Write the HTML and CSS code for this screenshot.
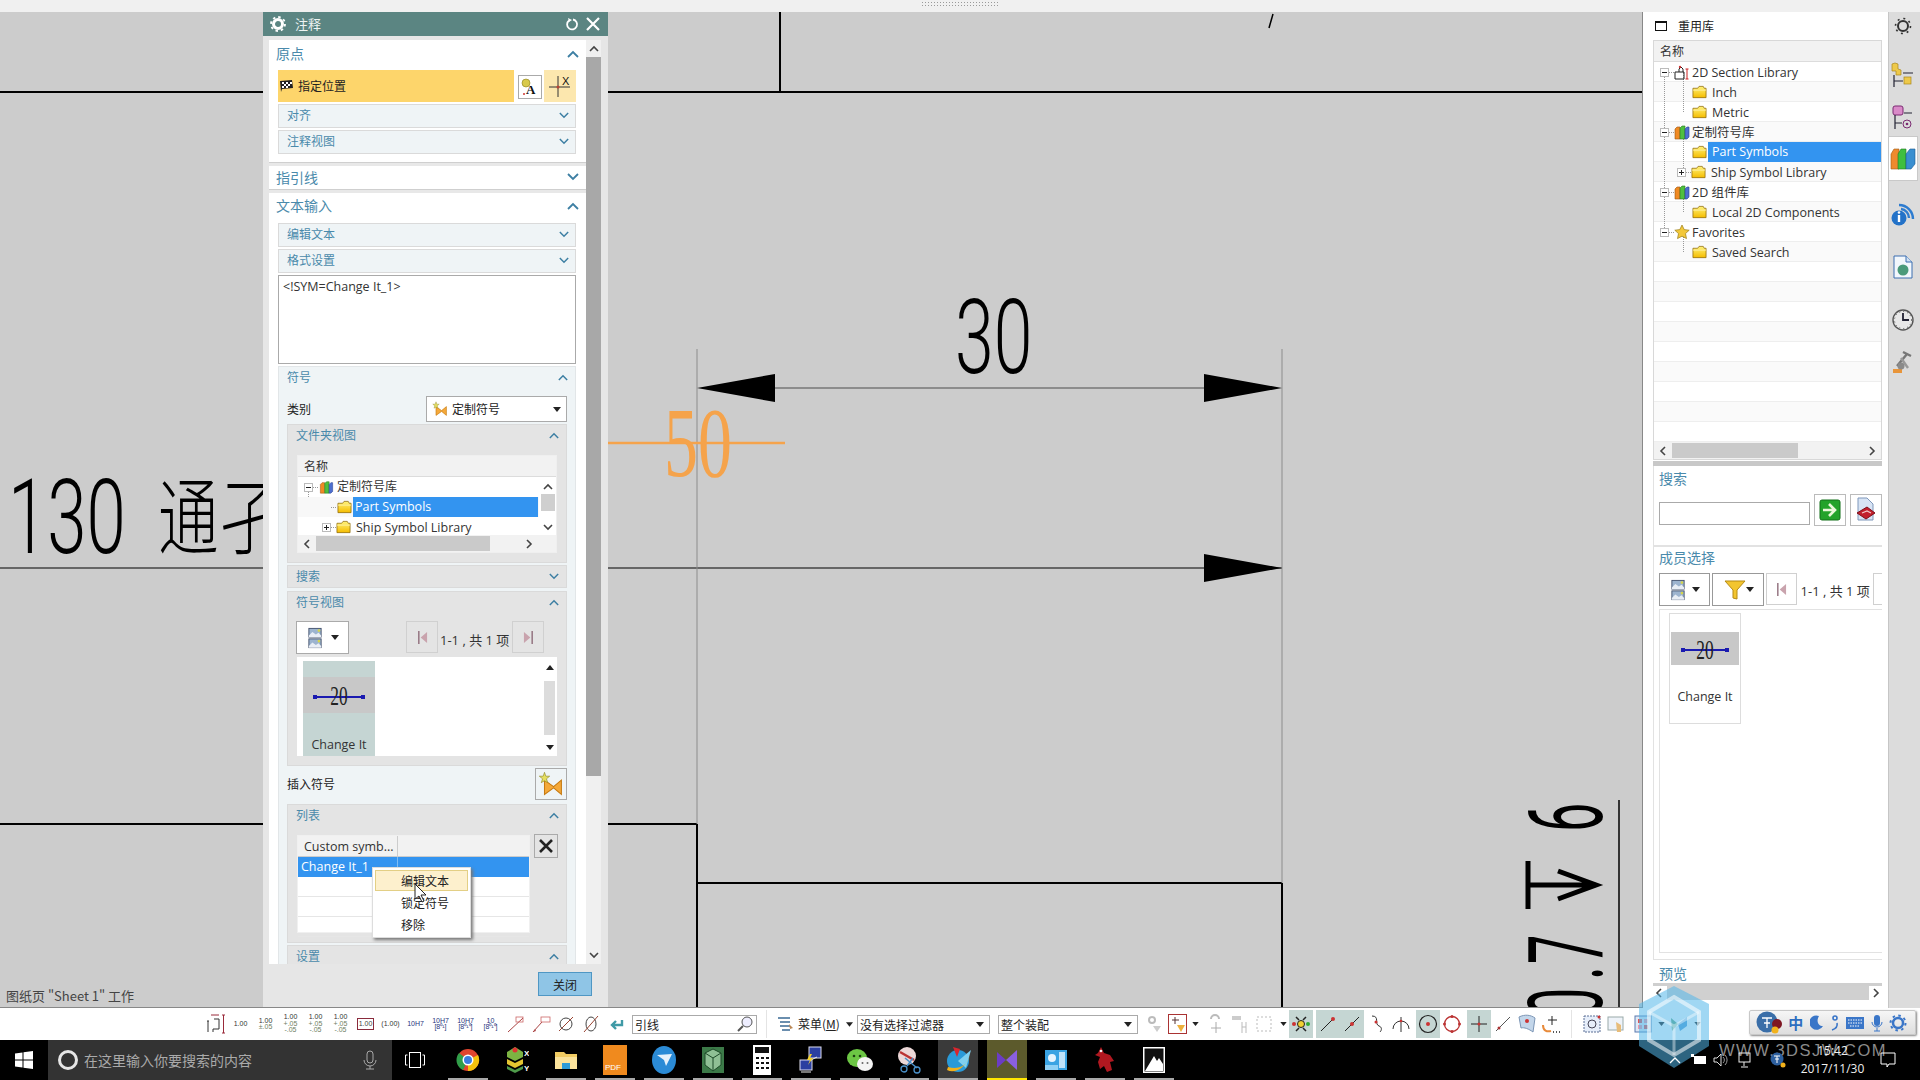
FILE: index.html
```html
<!DOCTYPE html>
<html lang="zh">
<head>
<meta charset="utf-8">
<title>注释</title>
<link rel="stylesheet" href="styles.css">
</head>
<body>
<svg class="defs" width="0" height="0">
  <defs>
    <linearGradient id="gFolder" x1="0" y1="0" x2="0" y2="1"><stop offset="0" stop-color="#fff37a"/><stop offset="1" stop-color="#f5bc00"/></linearGradient>
    <symbol id="folder" viewBox="0 0 16 14"><path d="M1 3h5l1.500-2H12l1 2h2v10H1z" fill="url(#gFolder)" stroke="#8f6a08" stroke-width=".8"/><path d="M1 5h14" stroke="#fff6b8" stroke-width=".8"/></symbol>
    <symbol id="books" viewBox="0 0 16 16"><path d="M1 5l2-2h3v12H1z" fill="#f08a24" stroke="#9a5410" stroke-width=".6"/><path d="M6 4l2-2h3v13H6z" fill="#4fbf3f" stroke="#2a7a20" stroke-width=".6"/><path d="M11 5l2-2h2v10l-2 2h-2z" fill="#4d6fd0" stroke="#27408f" stroke-width=".6"/></symbol>
    <symbol id="up" viewBox="0 0 12 8"><path d="M1 7l5-5 5 5" fill="none" stroke="#3d7fa3" stroke-width="1.800"/></symbol>
    <symbol id="down" viewBox="0 0 12 8"><path d="M1 1l5 5 5-5" fill="none" stroke="#3d7fa3" stroke-width="1.800"/></symbol>
    <symbol id="views" viewBox="0 0 16 24"><rect x="1" y="1" width="14" height="10" fill="#9db4cf" stroke="#3c4a66"/><path d="M1 9l4-4 4 3 3-2 3 3v2H1z" fill="#e9eef5"/><circle cx="12.500" cy="3.500" r="1.500" fill="#d6d64a"/><rect x="1" y="13" width="14" height="10" fill="#9db4cf" stroke="#3c4a66"/><path d="M1 21l4-4 4 3 3-2 3 3v2H1z" fill="#e9eef5"/><circle cx="12.500" cy="15.500" r="1.500" fill="#d6d64a"/></symbol>
    <symbol id="symstar" viewBox="0 0 20 20"><path d="M5 7l7 5 6-5v11l-6-5-7 5z" fill="#f5a93a" stroke="#c67a12" stroke-width=".8"/><path d="M5 1l1 3 3 0-2.500 2 1 3L5 7.500 2.500 9l1-3L1 4l3 0z" fill="#e6df5e" stroke="#8f8a2a" stroke-width=".5"/></symbol>
    <symbol id="prev" viewBox="0 0 12 16"><path d="M2 1v14" stroke="#8d6a78" stroke-width="1.500"/><path d="M11 2v12L4 8z" fill="#c9a3ad"/></symbol>
    <symbol id="next" viewBox="0 0 12 16"><path d="M10 1v14" stroke="#8d6a78" stroke-width="1.500"/><path d="M1 2v12l7-6z" fill="#c9a3ad"/></symbol>
    <symbol id="caretd" viewBox="0 0 8 5"><path d="M0 0h8L4 5z" fill="#222"/></symbol>
    <symbol id="sarrl" viewBox="0 0 8 10"><path d="M6 1L2 5l4 4" fill="none" stroke="#444" stroke-width="1.600"/></symbol>
    <symbol id="sarrr" viewBox="0 0 8 10"><path d="M2 1l4 4-4 4" fill="none" stroke="#444" stroke-width="1.600"/></symbol>
    <symbol id="sarru" viewBox="0 0 10 8"><path d="M1 6l4-4 4 4" fill="none" stroke="#444" stroke-width="1.600"/></symbol>
    <symbol id="sarrd" viewBox="0 0 10 8"><path d="M1 2l4 4 4-4" fill="none" stroke="#444" stroke-width="1.600"/></symbol>
  </defs>
</svg>

<div class="topstrip"><span class="grip"></span></div>

<main class="main">
  <section class="canvas">
    <svg class="drawing" viewBox="0 12 1642 995" width="1642" height="995">
      <g class="ln-black">
        <path d="M0 92H1642M780 12V92" stroke-width="2"/>
        <path d="M1273 14L1269 28" stroke-width="1.500"/>
        <path d="M0 568H1282" stroke-width="1"/>
        <path d="M0 824H697M697 883H1282M697 824V1008M1282 883V1008" stroke-width="2"/>
        <path d="M1619 800V1008" stroke-width="1.500"/>
      </g>
      <path class="ln-gray" d="M697 349V824M1282 349V883"/>
      <path class="ln-dim" d="M775 388H1204"/>
      <path d="M697 388L775 374V402Z M1282 388L1204 374V402Z M1282 568L1204 554V582Z" fill="#000"/>
      <text class="cad" transform="translate(955 373) scale(.67 1)">30</text>
      <text class="cad" transform="translate(8 553) scale(.68 1)">130</text>
      <text class="cad-cjk" transform="translate(158 548) scale(.72 1)">通孑</text>
      <path class="ln-orange" d="M607 443H785"/>
      <text class="cad-orange" transform="translate(664 476) scale(.68 1)">50</text>
      <text class="cad-side" transform="translate(1602 832) rotate(-90) scale(.5 1)">6</text>
      <path class="ln-sym" d="M1528 861V909M1528 885H1595M1558 871L1596 885L1558 899"/>
      <text class="cad-side" transform="translate(1602 964) rotate(-90) scale(.5 1)">7</text>
      <text class="cad-side" transform="translate(1602 980) rotate(-90) scale(.5 1)">.</text>
      <text class="cad-side" transform="translate(1602 1017) rotate(-90) scale(.5 1)">0</text>
    </svg>
    <p class="status">图纸页 "Sheet 1" 工作</p>

    <aside class="dialog">
      <header class="dlg-title">
        <svg class="ttl-gear" width="16" height="16" viewBox="0 0 16 16"><circle cx="8" cy="8" r="4.500" fill="none" stroke="#fff" stroke-width="3"/><circle cx="8" cy="8" r="7" fill="none" stroke="#fff" stroke-width="1.800" stroke-dasharray="2.500 3"/></svg>
        <span class="ttl-text">注释</span>
        <svg class="ttl-btn" width="14" height="14" viewBox="0 0 14 14"><path d="M3 3.500a5 5 0 1 0 4-1" fill="none" stroke="#fff" stroke-width="1.800"/><path d="M2 1l1 4 3-2z" fill="#fff"/></svg>
        <svg class="ttl-btn" width="14" height="14" viewBox="0 0 14 14"><path d="M1 1l12 12M13 1L1 13" stroke="#fff" stroke-width="2.200"/></svg>
      </header>
      <div class="dlg-body">
        <div class="dlg-scroll">
          <div class="sec-h tall"><span>原点</span><svg class="chev-l"><use href="#up"/></svg></div>
          <div class="sec-b pb8">
            <div class="origin-row">
              <div class="origin-bar">
                <svg width="15" height="14" viewBox="0 0 15 14"><path d="M2 13L1 2l12-1 1 8-11 1z" fill="#222"/><path d="M3 3h2v2H3zM7 3h2v2H7zM11 3h2v2h-2zM5 5h2v2H5zM9 5h2v2H9zM3 7h2v2H3zM7 7h2v2H7z" fill="#fff"/></svg>
                <span>指定位置</span>
              </div>
              <div class="btn-a">
                <svg width="20" height="20" viewBox="0 0 20 20"><circle cx="6" cy="6" r="4" fill="#d8c94a" stroke="#8a7d1a" stroke-width=".6"/><text x="6" y="17" class="svg-a">A</text><circle cx="4" cy="17" r="1" fill="#c33"/></svg>
              </div>
              <div class="btn-x">
                <svg width="24" height="26" viewBox="0 0 24 26"><path d="M10 3v21M1 14h21" stroke="#333" stroke-width="1"/><circle cx="10" cy="14" r="1.500" fill="#b43"/><text x="14" y="12" class="svg-x">X</text></svg>
              </div>
            </div>
            <div class="sub"><span>对齐</span><svg class="chev"><use href="#down"/></svg></div>
            <div class="sub"><span>注释视图</span><svg class="chev"><use href="#down"/></svg></div>
          </div>
          <div class="gap"></div>
          <div class="sec-h short"><span>指引线</span><svg class="chev-l"><use href="#down"/></svg></div>
          <div class="gap"></div>
          <div class="sec-h mid"><span>文本输入</span><svg class="chev-l"><use href="#up"/></svg></div>
          <div class="sec-b">
            <div class="sub"><span>编辑文本</span><svg class="chev"><use href="#down"/></svg></div>
            <div class="sub"><span>格式设置</span><svg class="chev"><use href="#down"/></svg></div>
            <div class="textbox">&lt;!SYM=Change It_1&gt;</div>

            <div class="group">
              <div class="grp-h"><span>符号</span><svg class="chev"><use href="#up"/></svg></div>
              <div class="kind-row">
                <span>类别</span>
                <div class="combo"><svg width="16" height="16"><use href="#symstar"/></svg><span class="combo-t">定制符号</span><svg class="caret"><use href="#caretd"/></svg></div>
              </div>

              <div class="grp2 h139">
                <div class="grp-h"><span>文件夹视图</span><svg class="chev"><use href="#up"/></svg></div>
                <div class="mini-tree">
                  <div class="tbl-head">名称</div>
                  <div class="mt-mid">
                    <div class="mt-rows">
                      <i class="dots-v dv-a"></i>
                      <div class="row"><i class="tw minus tw-a"></i><i class="dh dh-s"></i><svg class="ic15"><use href="#books"/></svg><span class="lbl-cn">定制符号库</span></div>
                      <div class="row alt"><i class="sp-b"></i><i class="dh dh-s"></i><svg class="ic15"><use href="#folder"/></svg><span class="sel sel-a">Part Symbols</span></div>
                      <div class="row"><i class="tw plus tw-b"></i><i class="dh dh-xs"></i><svg class="ic15"><use href="#folder"/></svg><span class="lbl-l">Ship Symbol Library</span></div>
                    </div>
                    <div class="vsb">
                      <svg class="sa"><use href="#sarru"/></svg><i class="vsb-t"></i><svg class="sa"><use href="#sarrd"/></svg>
                    </div>
                  </div>
                  <div class="hsb hsb-a"><svg class="sh"><use href="#sarrl"/></svg><i class="hsb-t"></i><svg class="sh"><use href="#sarrr"/></svg></div>
                </div>
              </div>

              <div class="grp2 collapsed"><div class="grp-h"><span>搜索</span><svg class="chev"><use href="#down"/></svg></div></div>

              <div class="grp2 h175">
                <div class="grp-h"><span>符号视图</span><svg class="chev"><use href="#up"/></svg></div>
                <div class="pager">
                  <div class="viewbtn"><svg width="14" height="22"><use href="#views"/></svg><svg class="caret"><use href="#caretd"/></svg></div>
                  <div class="pgbtn ml57"><svg width="11" height="15"><use href="#prev"/></svg></div>
                  <span class="pg-t">1-1 , 共 1 项</span>
                  <div class="pgbtn"><svg width="11" height="15"><use href="#next"/></svg></div>
                </div>
                <div class="symlist">
                  <figure class="card">
                    <div class="thumb"><i class="th-line"></i><span class="th-n">20</span></div>
                    <figcaption>Change It</figcaption>
                  </figure>
                  <div class="symsb"><svg class="caret-u"><use href="#caretd"/></svg><i></i><svg class="caret"><use href="#caretd"/></svg></div>
                </div>
              </div>

              <div class="ins-row">
                <span>插入符号</span>
                <div class="insbtn"><svg width="26" height="26"><use href="#symstar"/></svg></div>
              </div>

              <div class="grp2 h139 mt4">
                <div class="grp-h"><span>列表</span><svg class="chev"><use href="#up"/></svg></div>
                <div class="list-wrap">
                  <div class="ltable">
                    <div class="lt-head"><span class="lt-c1">Custom symb...</span><span class="lt-c2"></span></div>
                    <div class="lt-sel"><span class="lt-c1">Change It_1</span></div>
                    <div class="lt-row"></div>
                    <div class="lt-row"></div>
                    <div class="lt-row"></div>
                  </div>
                  <div class="delbtn"><svg width="16" height="16" viewBox="0 0 16 16"><path d="M2 2l12 12M14 2L2 14" stroke="#222" stroke-width="2.600"/></svg></div>
                </div>
              </div>

              <div class="grp2 collapsed"><div class="grp-h"><span>设置</span><svg class="chev"><use href="#up"/></svg></div></div>
            </div>
          </div>
        </div>
        <div class="dlg-sb">
          <svg class="sb-a"><use href="#sarru"/></svg>
          <i class="sb-thumb"></i>
          <svg class="sb-a sb-b"><use href="#sarrd"/></svg>
        </div>
      </div>
      <footer class="dlg-foot"><button class="close">关闭</button></footer>

      <div class="ctx">
        <div class="ctx-i hl">编辑文本</div>
        <div class="ctx-i">锁定符号</div>
        <div class="ctx-i">移除</div>
      </div>
      <svg class="cursor" width="14" height="20" viewBox="0 0 14 20"><path d="M1 1v15l4-3 3 6 2-1-3-6h5z" fill="#fff" stroke="#222"/></svg>
    </aside>
  </section>

  <section class="rpanel">
    <div class="r-title"><i class="r-box"></i><span>重用库</span></div>
    <div class="rtree">
      <div class="tbl-head">名称</div>
      <div class="rt-rows">
        <i class="dots-v dv-r1"></i><i class="dots-v dv-r2"></i><i class="dots-v dv-r3"></i><i class="dots-v dv-r4"></i><i class="dots-v dv-r5"></i>
        <div class="row2"><i class="tw minus"></i><i class="dh dh-r"></i><svg class="ic16" viewBox="0 0 16 16"><path d="M1 8h9v7H1zM5 8V5l2-2 2 2v3" fill="none" stroke="#222"/><path d="M13 5v10M11.500 5h3M11.500 15h3" stroke="#c22" stroke-width="1"/><circle cx="6" cy="3" r="1.200" fill="#c33"/></svg><span class="lbl-cn">2D Section Library</span></div>
        <div class="row2 lv2"><svg class="ic15"><use href="#folder"/></svg><span class="lbl-l">Inch</span></div>
        <div class="row2 lv2"><svg class="ic15"><use href="#folder"/></svg><span class="lbl-l">Metric</span></div>
        <div class="row2"><i class="tw minus"></i><i class="dh dh-r"></i><svg class="ic16"><use href="#books"/></svg><span class="lbl-cn">定制符号库</span></div>
        <div class="row2 lv2"><svg class="ic15"><use href="#folder"/></svg><span class="sel sel-r">Part Symbols</span></div>
        <div class="row2 lv2p"><i class="tw plus"></i><i class="dh dh-xs"></i><svg class="ic15"><use href="#folder"/></svg><span class="lbl-l">Ship Symbol Library</span></div>
        <div class="row2"><i class="tw minus"></i><i class="dh dh-r"></i><svg class="ic16"><use href="#books"/></svg><span class="lbl-cn">2D 组件库</span></div>
        <div class="row2 lv2"><svg class="ic15"><use href="#folder"/></svg><span class="lbl-l">Local 2D Components</span></div>
        <div class="row2"><i class="tw minus"></i><i class="dh dh-r"></i><svg class="ic16" viewBox="0 0 16 16"><path d="M8 1l2.200 4.600 5 .6-3.700 3.400 1 5L8 12.200 3.500 14.600l1-5L.8 6.200l5-.6z" fill="#f3c83a" stroke="#9a7d18" stroke-width=".7"/></svg><span class="lbl-cn">Favorites</span></div>
        <div class="row2 lv2"><svg class="ic15"><use href="#folder"/></svg><span class="lbl-l">Saved Search</span></div>
      </div>
      <div class="hsb hsb-r"><svg class="sh"><use href="#sarrl"/></svg><i class="hsb-t2"></i><svg class="sh"><use href="#sarrr"/></svg></div>
    </div>
    <div class="sash"></div>
    <div class="rlower">
      <h3 class="r-h">搜索</h3>
      <div class="r-search">
        <div class="r-input"></div>
        <div class="r-sq"><svg width="22" height="22" viewBox="0 0 22 22"><rect x="1" y="1" width="20" height="20" rx="2" fill="#23a32a" stroke="#127018"/><path d="M4 11h11M10 5l6 6-6 6" fill="none" stroke="#eaf7da" stroke-width="2.600"/></svg></div>
        <div class="r-sq"><svg width="24" height="26" viewBox="0 0 24 26"><path d="M4 1h9l6 6v16H4z" fill="#d8e4f4" stroke="#7f97bb"/><path d="M3 16l10-6 8 6-9 6z" fill="#c21f2c" stroke="#7e0e18"/><path d="M8 16l5-2 4 2" stroke="#f2c8c8" stroke-width="1.200" fill="none"/></svg></div>
      </div>
      <div class="r-sep"></div>
      <h3 class="r-h h22">成员选择</h3>
      <div class="r-pager">
        <div class="viewbtn r"><svg width="14" height="22"><use href="#views"/></svg><svg class="caret"><use href="#caretd"/></svg></div>
        <div class="viewbtn r"><svg width="22" height="22" viewBox="0 0 22 22"><path d="M1 2h20L13 11v9l-4-1v-8z" fill="#f3c52f" stroke="#b58a15"/></svg><svg class="caret"><use href="#caretd"/></svg></div>
        <div class="pgbtn"><svg width="11" height="15"><use href="#prev"/></svg></div>
        <span class="pg-t pg-r">1-1 , 共 1 项</span>
        <div class="pgbtn peek"></div>
      </div>
      <div class="r-list">
        <figure class="card-r">
          <div class="thumb-r"><i class="th-line"></i><span class="th-n">20</span></div>
          <figcaption>Change It</figcaption>
        </figure>
      </div>
    </div>
    <h3 class="r-h h-prev">预览</h3>
    <div class="sash2"></div>
    <div class="hsb hsb-p"><svg class="sh"><use href="#sarrl"/></svg><i class="hsb-t3"></i><svg class="sh"><use href="#sarrr"/></svg></div>
  </section>

  <nav class="tabs">
    <div class="tab t1"><svg width="18" height="18" viewBox="0 0 18 18"><circle cx="9" cy="9" r="5" fill="none" stroke="#333" stroke-width="2"/><circle cx="9" cy="9" r="7.500" fill="none" stroke="#333" stroke-width="1.600" stroke-dasharray="2 3.900"/></svg></div>
    <div class="tab t2"><svg width="24" height="26" viewBox="0 0 24 26"><path d="M1 2l3-1 3 1v5l3 1v5H5V9H1z" fill="#eec94a" stroke="#a9861a" stroke-width=".7"/><rect x="13" y="15" width="7" height="7" fill="#eec94a" stroke="#a9861a" stroke-width=".7"/><path d="M3 13v12M3 19h9M12 11h10" stroke="#223" stroke-width="1.200"/></svg></div>
    <div class="tab t3"><svg width="22" height="26" viewBox="0 0 22 26"><rect x="1" y="1" width="10" height="9" rx="2" fill="#d98ac8" stroke="#7b2b72"/><path d="M3 10v14M3 18h7M12 8h8" stroke="#223" stroke-width="1.200"/><circle cx="15" cy="19" r="4" fill="none" stroke="#7b2b72"/><circle cx="15" cy="19" r="1.300" fill="#7b2b72"/></svg></div>
    <div class="tab active"><svg width="26" height="22" viewBox="0 0 26 22"><path d="M1 6l3-5h5v20H1z" fill="#ee8a2e" stroke="#a05a14" stroke-width=".6"/><path d="M8 6l3-5h5v20H8z" fill="#3fbf3f" stroke="#1e7a1e" stroke-width=".6"/><path d="M16 6l4-5h5v15l-4 5h-5z" fill="#3a8fd0" stroke="#1c5a90" stroke-width=".6"/></svg></div>
    <div class="tab t5"><svg width="24" height="26" viewBox="0 0 24 26"><path d="M8 5a14 14 0 0 1 14 14M10 9a9 9 0 0 1 8 9" fill="none" stroke="#2e7cd0" stroke-width="2.400"/><circle cx="8" cy="18" r="7.500" fill="#2372c8"/><path d="M8 15v7" stroke="#fff" stroke-width="2.400"/><circle cx="8" cy="12.500" r="1.300" fill="#fff"/></svg></div>
    <div class="tab t6"><svg width="20" height="24" viewBox="0 0 20 24"><path d="M1 1h12l6 6v16H1z" fill="#f2f7fc" stroke="#3c6fb0"/><circle cx="10" cy="15" r="5.500" fill="#4a9a7a"/><path d="M13 1v6h6" fill="#cfe0f2" stroke="#3c6fb0"/></svg></div>
    <div class="tab t7"><svg width="22" height="22" viewBox="0 0 22 22"><circle cx="11" cy="11" r="10" fill="#e8e8e8" stroke="#555" stroke-width="1.400"/><circle cx="11" cy="11" r="8.500" fill="none" stroke="#555" stroke-dasharray="1 3"/><path d="M11 4v7h6" fill="none" stroke="#223" stroke-width="1.800"/></svg></div>
    <div class="tab t8"><svg width="22" height="24" viewBox="0 0 22 24"><path d="M5 16L15 4M11 2l8 4" stroke="#777" stroke-width="2.400"/><path d="M9 8l7 10" stroke="#999" stroke-width="2.400"/><path d="M1 19h9v4H1z" fill="#e8953a"/><circle cx="9" cy="16" r="3.500" fill="#8a8a8a"/></svg></div>
  </nav>
</main>

<div class="toolbar">
  <div class="cell"><svg width="20" height="20" viewBox="0 0 20 20"><path d="M1 7h2M2 7v11M8 5h5v10H7v3" fill="none" stroke="#333"/><path d="M16 1h3M17.500 1v18M16 19h3M5 1h8" stroke="#9a2a3a"/></svg></div>
  <div class="cell"><span class="dim">1.00</span></div>
  <div class="cell"><span class="dim">1.00<b class="tol">±.05</b></span></div>
  <div class="cell"><span class="dim">1.00<b class="tol">+.05<br>-.05</b></span></div>
  <div class="cell"><span class="dim">1.00<b class="tol">+.05<br>-.05</b></span></div>
  <div class="cell"><span class="dim">1.00<b class="tol">+.05<br>-.05</b></span></div>
  <div class="cell"><span class="dim boxed">1.00</span></div>
  <div class="cell"><span class="dim">(1.00)</span></div>
  <div class="cell"><span class="dim blue">10H7</span></div>
  <div class="cell"><span class="dim blue">10H7<br>[8⁰¹]</span></div>
  <div class="cell"><span class="dim blue">10H7<br>[8⁰¹⁰]</span></div>
  <div class="cell"><span class="dim blue">10<br>[8⁰¹⁰]</span></div>
  <div class="cell"><svg width="20" height="20" viewBox="0 0 20 20"><path d="M2 18L17 4" stroke="#a44"/><rect x="10" y="3" width="7" height="5" fill="none" stroke="#c66" stroke-width=".8"/></svg></div>
  <div class="cell"><svg width="20" height="20" viewBox="0 0 20 20"><path d="M2 18L11 8" stroke="#a44"/><path d="M2 18l3-1-1-2z" fill="#a44"/><rect x="10" y="3" width="9" height="5" fill="none" stroke="#c66" stroke-width=".8"/></svg></div>
  <div class="cell"><svg width="20" height="20" viewBox="0 0 20 20"><circle cx="10" cy="10" r="6" fill="none" stroke="#444"/><path d="M3 17L17 3" stroke="#943"/></svg></div>
  <div class="cell"><svg width="20" height="20" viewBox="0 0 20 20"><ellipse cx="10" cy="10" rx="5" ry="7" fill="none" stroke="#444"/><path d="M3 18L17 2" stroke="#943"/></svg></div>
  <div class="cell"><svg width="18" height="18" viewBox="0 0 18 18"><path d="M15 5v5H6M9 6l-4 4 4 4" fill="none" stroke="#3f9aa6" stroke-width="2.400"/></svg></div>
  <div class="tb-input"><span>引线</span><svg width="18" height="18" viewBox="0 0 18 18"><circle cx="11" cy="7" r="5" fill="#eef" stroke="#555"/><path d="M7 11l-5 5" stroke="#555" stroke-width="2"/></svg></div>
  <i class="tb-sep ml9"></i>
  <div class="tb-menu"><svg width="17" height="16" viewBox="0 0 17 16"><path d="M1 2h12M3 6h10M3 10h10M5 14h8" stroke="#3a6a94" stroke-width="1.500"/><path d="M12 8l4 4-3 1z" fill="#b85"/></svg><span>菜单(<u>M</u>)</span><svg class="caret"><use href="#caretd"/></svg></div>
  <div class="tb-sel w133"><span>没有选择过滤器</span><svg class="caret"><use href="#caretd"/></svg></div>
  <div class="tb-sel w140"><span>整个装配</span><svg class="caret"><use href="#caretd"/></svg></div>
  <div class="cell ml5 w24"><svg width="16" height="18" viewBox="0 0 16 18"><circle cx="5" cy="5" r="3" fill="none" stroke="#bbb" stroke-width="2"/><path d="M6 11h8l-4 6z" fill="#ccc"/></svg></div>
  <div class="cell w22"><svg width="20" height="22" viewBox="0 0 20 22"><rect x=".5" y="1.500" width="18" height="19" fill="#fff" stroke="#a33"/><path d="M7 4v7M4 7h7" stroke="#533"/><path d="M9 12h8l-4 7z" fill="#eeb03c"/></svg></div>
  <span class="arrow"><svg class="caret"><use href="#caretd"/></svg></span>
  <div class="cell ml3 w24"><svg width="18" height="20" viewBox="0 0 18 20"><path d="M4 5a4 4 0 0 1 8 0" fill="none" stroke="#bbb" stroke-width="2"/><path d="M9 8v11M4 14h10" stroke="#aaa"/></svg></div>
  <div class="cell w24"><svg width="18" height="20" viewBox="0 0 18 20"><rect x="1" y="2" width="9" height="4" fill="#ccc"/><path d="M11 8v11M15 8v11M11 13h4" stroke="#bbb"/></svg></div>
  <div class="cell w24"><svg width="18" height="18" viewBox="0 0 18 18"><rect x="2" y="2" width="14" height="14" fill="none" stroke="#bbb" stroke-dasharray="2 2"/></svg></div>
  <span class="arrow ml1"><svg class="caret"><use href="#caretd"/></svg></span>
  <div class="cell w24 on"><svg width="20" height="20" viewBox="0 0 20 20"><circle cx="10" cy="10" r="3.500" fill="#f1d030" stroke="#222"/><path d="M5 3l3 3M15 3l-3 3M5 17l3-3M15 17l-3-3" stroke="#222" stroke-width="1.500"/><circle cx="3" cy="10" r="2" fill="#c33"/><circle cx="17" cy="10" r="2" fill="#3a3"/></svg></div>
  <div class="cell w24 on ml3"><svg width="18" height="18" viewBox="0 0 18 18"><path d="M2 16L14 4" stroke="#222"/><circle cx="14" cy="4" r="2" fill="#c33"/></svg></div>
  <div class="cell w24 on"><svg width="18" height="18" viewBox="0 0 18 18"><path d="M2 16L16 2" stroke="#222"/><circle cx="9" cy="9" r="2" fill="#c33"/></svg></div>
  <div class="cell w24 ml1"><svg width="18" height="20" viewBox="0 0 18 20"><path d="M4 2c8 0 2 8 7 10 3 1 3 4 1 6" fill="none" stroke="#333"/><circle cx="8" cy="8" r="1.500" fill="#c33"/></svg></div>
  <div class="cell w24"><svg width="20" height="20" viewBox="0 0 20 20"><path d="M10 3v15M2 15a8 8 0 0 1 16 0" fill="none" stroke="#333"/><circle cx="10" cy="7" r="1.300" fill="#c33"/></svg></div>
  <div class="cell w24 on ml3"><svg width="20" height="20" viewBox="0 0 20 20"><circle cx="10" cy="10" r="8.500" fill="none" stroke="#222" stroke-width="1.200"/><circle cx="10" cy="10" r="2" fill="#c33"/></svg></div>
  <div class="cell w24"><svg width="20" height="20" viewBox="0 0 20 20"><circle cx="10" cy="10" r="7.500" fill="none" stroke="#b33" stroke-width="1.300"/><circle cx="10" cy="2.500" r="1.500" fill="#b33"/><circle cx="10" cy="17.500" r="1.500" fill="#b33"/><circle cx="2.500" cy="10" r="1.500" fill="#b33"/><circle cx="17.500" cy="10" r="1.500" fill="#b33"/></svg></div>
  <div class="cell w24 on ml3"><svg width="18" height="18" viewBox="0 0 18 18"><path d="M9 1v16M1 9h16" stroke="#222"/><circle cx="9" cy="9" r="1.500" fill="#c33"/></svg></div>
  <div class="cell w24"><svg width="18" height="18" viewBox="0 0 18 18"><path d="M2 16L16 2" stroke="#555"/><circle cx="5" cy="13" r="1.500" fill="#a33"/></svg></div>
  <div class="cell w24"><svg width="22" height="22" viewBox="0 0 22 22"><path d="M3 4c6-3 12-2 16 1l-2 14C13 16 8 14 5 15z" fill="#c3d6ea" stroke="#7b95b5"/><circle cx="11" cy="8" r="2" fill="#c33"/></svg></div>
  <div class="cell w24"><svg width="22" height="22" viewBox="0 0 22 22"><path d="M12 3v9M8 7h9" stroke="#222"/><path d="M3 12c0 6 4 7 8 6" fill="none" stroke="#e88a3a" stroke-width="2"/><path d="M13 19h1M16 19h1M19 19h1" stroke="#222" stroke-width="1.500"/></svg></div>
  <i class="tb-sep ml8"></i>
  <div class="cell w24 ml8"><svg width="20" height="20" viewBox="0 0 20 20"><rect x="2" y="2" width="16" height="16" fill="#e6eefa" stroke="#5a6f95" stroke-dasharray="2 1"/><circle cx="10" cy="10" r="4" fill="none" stroke="#445"/><circle cx="17" cy="3" r="1.500" fill="#c33"/></svg></div>
  <div class="cell w24"><svg width="20" height="20" viewBox="0 0 20 20"><rect x="2" y="3" width="15" height="13" fill="#eef3f9" stroke="#9aa"/><path d="M10 8l5 3v7h-4z" fill="#e7bc7a"/></svg></div>
  <div class="cell w24 ml3"><svg width="18" height="18" viewBox="0 0 18 18"><rect x="1" y="1" width="16" height="16" fill="#dfe8f4" stroke="#5a7bb0"/><rect x="4" y="4" width="4" height="4" fill="#d55"/><rect x="10" y="4" width="4" height="4" fill="#e9a"/><rect x="4" y="10" width="4" height="4" fill="#e9a"/><rect x="10" y="10" width="4" height="4" fill="#d55"/></svg></div>
  <span class="arrow"><svg class="caret"><use href="#caretd"/></svg></span>
  <div class="cell w24"><svg width="20" height="20" viewBox="0 0 20 20"><path d="M2 4l7 6-6 7z" fill="#6a8" /><path d="M9 10l9-7v9l-7 5z" fill="#5a9fd8"/></svg></div>
  <span class="arrow"><svg class="caret"><use href="#caretd"/></svg></span>
</div>

<footer class="taskbar">
  <div class="tk-start"><svg width="18" height="18" viewBox="0 0 18 18"><path d="M0 2.500l7.500-1v7H0zM8.500 1.300L18 0v8.500H8.500zM0 9.500h7.500v7L0 15.500zM8.500 9.500H18V18l-9.500-1.300z" fill="#fff"/></svg></div>
  <div class="tk-search">
    <i class="cortana"></i>
    <span>在这里输入你要搜索的内容</span>
    <svg width="14" height="20" viewBox="0 0 14 20"><rect x="4" y="1" width="6" height="12" rx="3" fill="none" stroke="#aaa"/><path d="M1 10a6 6 0 0 0 12 0M7 16v3M3 19h8" fill="none" stroke="#aaa"/></svg>
  </div>
  <div class="tk-view"><svg width="20" height="18" viewBox="0 0 20 18"><rect x="4.500" y="1.500" width="11" height="15" fill="none" stroke="#fff"/><path d="M2.500 4H.5v10h2M17.500 4h2v10h-2" fill="none" stroke="#fff"/></svg></div>
  <div class="app on"><svg width="24" height="24" viewBox="0 0 24 24"><circle cx="12" cy="12" r="11" fill="#e0452f"/><path d="M12 12L22 7a11 11 0 0 1-10 16z" fill="#f4c20d"/><path d="M12 12L7 22A11 11 0 0 1 3 5z" fill="#2f9e49"/><circle cx="12" cy="12" r="5.500" fill="#fff"/><circle cx="12" cy="12" r="4" fill="#3a7de0"/></svg></div>
  <div class="app"><svg width="24" height="28" viewBox="0 0 24 28"><path d="M2 6l8-5 8 5v5l-8 4-8-4z" fill="#7cb342"/><path d="M2 13l8 4 8-4v5l-8 4-8-4z" fill="#e4c531"/><path d="M2 20l8 4 8-4v3l-8 4-8-4z" fill="#4e9a4a"/><circle cx="10" cy="4" r="2.500" fill="#d33"/><text x="19" y="10" class="svg-xyz">X</text><text x="19" y="25" class="svg-xyz">Y</text></svg></div>
  <div class="app on"><svg width="24" height="22" viewBox="0 0 24 22"><path d="M1 3h9l2 2h11v15H1z" fill="#f2cc63"/><path d="M1 8h22v12H1z" fill="#fbe39b"/><path d="M8 14h8v6H8z" fill="#2d9bd8"/></svg></div>
  <div class="app on"><div class="pdf">PDF</div></div>
  <div class="app on"><svg width="26" height="28" viewBox="0 0 26 28"><ellipse cx="13" cy="14" rx="12" ry="14" fill="#2b8bd6"/><path d="M6 9l15-1-6 12-2-6z" fill="#e7f2fb"/></svg></div>
  <div class="app on"><svg width="24" height="28" viewBox="0 0 24 28"><rect x="1" y="1" width="22" height="26" fill="#3c7a48"/><path d="M12 3l8 4v12l-8 6-8-6V7z" fill="#8fc095" stroke="#1d4a28"/><path d="M4 7l8 5 8-5M12 12v13" stroke="#1d4a28" fill="none"/></svg></div>
  <div class="app on"><svg width="18" height="30" viewBox="0 0 18 30"><rect width="18" height="30" fill="#fff"/><rect x="2" y="2" width="14" height="6" fill="#111"/><path d="M3 12h3v2H3zM8 12h3v2H8zM13 12h3v2h-3zM3 17h3v2H3zM8 17h3v2H8zM13 17h3v2h-3zM3 22h3v2H3zM8 22h3v2H8zM13 22h3v2h-3z" fill="#111"/></svg></div>
  <div class="app on"><svg width="24" height="28" viewBox="0 0 24 28"><rect x="10" y="1" width="12" height="11" fill="#2b3fa0" stroke="#dde"/><rect x="1" y="14" width="12" height="10" fill="#2b3fa0" stroke="#dde"/><path d="M2 26h10M12 14l6-3" stroke="#eee"/><path d="M11 8l-3 6h3l-2 5 5-7h-3l2-4z" fill="#f3d12e"/></svg></div>
  <div class="app on"><svg width="26" height="24" viewBox="0 0 26 24"><ellipse cx="10" cy="10" rx="10" ry="9" fill="#6cc644"/><circle cx="7" cy="8" r="1.300" fill="#1c4010"/><circle cx="13" cy="8" r="1.300" fill="#1c4010"/><ellipse cx="18" cy="16" rx="8" ry="7" fill="#f4f4f4"/><circle cx="15.500" cy="15" r="1" fill="#666"/><circle cx="20.500" cy="15" r="1" fill="#666"/></svg></div>
  <div class="app on"><svg width="24" height="28" viewBox="0 0 24 28"><circle cx="10" cy="10" r="9" fill="#ecd8d8"/><path d="M3 6l14 8" stroke="#b33" stroke-width="2.500"/><path d="M8 12l12 10M10 20l6-8" stroke="#4a90c8" stroke-width="1.500"/><circle cx="7" cy="23" r="3" fill="none" stroke="#4a90c8" stroke-width="1.300"/><circle cx="20" cy="24" r="3" fill="none" stroke="#4a90c8" stroke-width="1.300"/></svg></div>
  <div class="app hi"><svg width="26" height="28" viewBox="0 0 26 28"><circle cx="13" cy="15" r="11" fill="#2a9ad8"/><path d="M13 15L26 4 21 22z" fill="#7fd0f0"/><path d="M8 1l7 2-3 8z" fill="#d8262e"/><path d="M2 24c8 4 18-2 23-14-3 10-12 14-22 11z" fill="#f2b21c"/></svg></div>
  <div class="app vs"><svg width="22" height="24" viewBox="0 0 22 24"><path d="M1 4l9 8-9 8z" fill="#6b3cc4"/><path d="M21 2v20L10 12z" fill="#8a5fe0"/></svg></div>
  <div class="app on"><svg width="22" height="20" viewBox="0 0 22 20"><rect width="22" height="20" fill="#3aa3e3"/><circle cx="7" cy="8" r="4" fill="#e6f4ff"/><path d="M14 2h6v16h-6z" fill="#bfe2fa"/><path d="M0 15h13v5H0z" fill="#8fd0f5"/></svg></div>
  <div class="app on"><svg width="24" height="28" viewBox="0 0 24 28"><path d="M8 1l3 6 6 2 4 6-4 1 2 8-5 2-3-6-4 3-2-7 2-5-5-2 3-2z" fill="#b01820"/><circle cx="8" cy="5" r="1.300" fill="#eee"/></svg></div>
  <div class="app on"><svg width="22" height="26" viewBox="0 0 22 26"><rect width="22" height="26" fill="#fff"/><rect x="1.500" y="1.500" width="19" height="23" fill="#111"/><path d="M2 24L11 9l3 5 2-3 4 6v7z" fill="#fff"/></svg></div>
  <div class="tray">
    <svg class="tr-chev" width="12" height="8" viewBox="0 0 12 8"><path d="M1 7l5-5 5 5" fill="none" stroke="#fff" stroke-width="1.300"/></svg>
    <svg class="tr-bat" width="16" height="12" viewBox="0 0 16 12"><rect x="3" y="2" width="12" height="8" fill="#fff"/><path d="M0 0h3v3H0z" fill="#fff"/></svg>
    <svg class="tr-vol" width="16" height="14" viewBox="0 0 16 14"><path d="M1 5h3l4-4v12l-4-4H1z" fill="none" stroke="#ddd"/><path d="M10 4a4 4 0 0 1 0 6M12 2a7 7 0 0 1 0 10" fill="none" stroke="#999"/></svg>
    <svg class="tr-net" width="16" height="16" viewBox="0 0 16 16"><rect x="1" y="1" width="11" height="9" fill="none" stroke="#eee"/><path d="M6 10v4M3 15h7" stroke="#eee"/></svg>
    <svg class="tr-ime" width="16" height="16" viewBox="0 0 16 16"><circle cx="7" cy="7" r="6.500" fill="#2d5f9e"/><path d="M4 4h6M7 4v7M5 7h4" stroke="#fff"/><circle cx="13" cy="13" r="2.500" fill="#f2b21c"/></svg>
    <div class="clock"><span>15:42</span><span>2017/11/30</span></div>
    <svg class="tr-notif" width="16" height="16" viewBox="0 0 16 16"><path d="M1 1h14v11H9l-2 3v-3H1z" fill="none" stroke="#fff"/></svg>
  </div>
</footer>

<div class="ime">
  <svg width="26" height="24" viewBox="0 0 26 24"><circle cx="11" cy="11" r="10.500" fill="#3a6ea8"/><path d="M6 7h10M11 7v10M8 12h6" stroke="#fff" stroke-width="1.300"/><circle cx="21" cy="13" r="5" fill="#7e1622"/><circle cx="19" cy="19" r="3.500" fill="#f2b21c"/></svg>
  <span class="ime-zh">中</span>
  <svg width="14" height="16" viewBox="0 0 14 16"><path d="M9 1a7 7 0 0 0-7 12 7 7 0 0 0 11-2C8 11 6 6 9 1z" fill="#3a76c8"/></svg>
  <svg width="10" height="16" viewBox="0 0 10 16"><circle cx="5" cy="3" r="2" fill="none" stroke="#3a76c8" stroke-width="1.600"/><path d="M7 8c1 4-2 6-5 7" fill="none" stroke="#3a76c8" stroke-width="1.600"/></svg>
  <svg width="18" height="12" viewBox="0 0 18 12"><rect width="18" height="12" fill="#3a76c8"/><path d="M2 3h14M2 6h14M4 9h10" stroke="#fff" stroke-dasharray="1.500 1"/></svg>
  <svg width="12" height="18" viewBox="0 0 12 18"><rect x="3" y="1" width="6" height="11" rx="3" fill="#3a76c8"/><path d="M1 8a5 5 0 0 0 10 0M6 14v3M3 17h6" fill="none" stroke="#3a76c8"/></svg>
  <svg width="18" height="18" viewBox="0 0 18 18"><circle cx="9" cy="9" r="5" fill="none" stroke="#3a76c8" stroke-width="2.500"/><circle cx="9" cy="9" r="7.500" fill="none" stroke="#3a76c8" stroke-width="2" stroke-dasharray="2.500 3.400"/></svg>
</div>

<svg class="wm-hex" width="72" height="84" viewBox="0 0 72 84"><path d="M36 1l35 18v42L36 83 1 61V19z" fill="#52b6ea" fill-opacity=".55"/><path d="M36 12L61 27v28L36 70 11 55V27z" fill="none" stroke="#fff" stroke-opacity=".55" stroke-width="4"/><path d="M11 27l25 14 25-14M36 41v29" fill="none" stroke="#fff" stroke-opacity=".4" stroke-width="3"/></svg>
<div class="wm-text">WWW.3DSJW.COM</div>
</body>
</html>
```

FILE: styles.css
```css
* { box-sizing: border-box; }
html, body { margin: 0; padding: 0; }
body {
  width: 1920px; height: 1080px; overflow: hidden; position: relative;
  font: 12px/1.2 "Noto Sans CJK SC", "Open Sans", sans-serif;
  color: #222; background: #fff;
}
i { display: block; font-style: normal; }
svg { display: block; flex: none; }
.defs { position: absolute; }
h3, p, figure { margin: 0; font-weight: 400; }

.topstrip { height: 12px; background: #f0f0f0; display: flex; justify-content: center; }
.grip {
  width: 78px; height: 7px; margin-top: 1px;
  background-image: radial-gradient(#9a9a9a .8px, transparent 1px);
  background-size: 3px 3px;
}

.main { height: 996px; display: flex; }
.canvas { width: 1643px; position: relative; background: #cccccc; border-right: 1px solid #888; border-bottom: 1px solid #888; overflow: hidden; }
.drawing { position: absolute; left: 0; top: 0; }
.ln-black path, .ln-black { stroke: #000; fill: none; }
.ln-gray { stroke: #8c8c8c; stroke-width: 1; fill: none; }
.ln-dim { stroke: #8c8c8c; stroke-width: 2; fill: none; }
.ln-orange { stroke: #f5a34b; stroke-width: 2.500; fill: none; }
.ln-sym { stroke: #000; stroke-width: 5; fill: none; }
.cad { font-family: Roboto, "Liberation Sans", sans-serif; font-size: 104px; font-weight: 300; fill: #000; }
.cad-side { font-family: Roboto, "Liberation Sans", sans-serif; font-size: 104px; font-weight: 400; fill: #000; }
.cad-cjk { font-family: "Noto Sans CJK SC", sans-serif; font-size: 84px; font-weight: 300; fill: #000; }
.cad-orange { font-family: "Liberation Serif", serif; font-size: 100px; fill: #f5a34b; }
.status { position: absolute; left: 6px; top: 976px; font-size: 13px; color: #444; }

/* dialog */
.dialog { position: absolute; left: 263px; top: 0; width: 345px; height: 996px; background: #e6e6e6; display: flex; flex-direction: column; }
.dlg-title { height: 24px; flex: none; background: #5b8582; color: #fff; display: flex; align-items: center; padding: 0 8px 0 7px; }
.ttl-text { font-size: 13px; margin-left: 9px; flex: 1; color: #eef4f3; }
.ttl-btn { margin-left: 6px; }
.dlg-body { flex: 1; display: flex; padding: 4px 6px 0 6px; min-height: 0; }
.dlg-scroll { width: 317px; background: #fff; overflow: hidden; }
.dlg-sb { width: 15px; background: #f0f0f0; display: flex; flex-direction: column; align-items: center; }
.sb-a { width: 10px; height: 8px; margin: 5px 0 4px; }
.sb-thumb { width: 15px; height: 719px; background: #a8a8a8; }
.sb-b { margin-top: auto; margin-bottom: 5px; }
.dlg-foot { height: 44px; flex: none; display: flex; justify-content: flex-end; padding: 8px 16px 0 0; }
.close { width: 54px; height: 24px; padding: 0; background: #8fc5e6; border: 1px solid #4f97c4; font: 12px "Noto Sans CJK SC", sans-serif; color: #222; }

.sec-h { display: flex; justify-content: space-between; align-items: center; padding: 0 7px 3px 7px; font-size: 14px; color: #4a8aab; }
.sec-h.tall { height: 30px; }
.sec-h.short { height: 23px; padding-bottom: 1px; }
.sec-h.mid { height: 28px; }
.chev-l { width: 12px; height: 8px; }
.chev { width: 10px; height: 7px; }
.sec-b { padding: 0 10px 0 9px; }
.pb8 { padding-bottom: 8px; }
.gap { height: 4px; background: #e8e8e8; border-top: 1px solid #cfcfcf; }

.origin-row { display: flex; height: 32px; }
.origin-bar { width: 236px; background: #fdd56b; display: flex; align-items: center; gap: 4px; padding-left: 1px; }
.btn-a { width: 24px; height: 24px; margin: 5px 2px 0 4px; background: #fff; border: 1px solid #aaa; display: flex; align-items: center; justify-content: center; }
.btn-x { width: 32px; background: #fce7ae; display: flex; align-items: center; justify-content: center; }
.svg-a { font: 700 13px "Liberation Serif", serif; fill: #111; }
.svg-x { font: 11px "Liberation Sans", sans-serif; fill: #111; }
.svg-xyz { font: 700 8px "Liberation Sans", sans-serif; fill: #fff; }

.sub { height: 24px; margin-top: 2px; background: #eff4f6; border: 1px solid #dadada; color: #4a8aab; display: flex; justify-content: space-between; align-items: center; padding: 0 6px 1px 8px; }
.textbox { height: 89px; margin-top: 2px; border: 1px solid #aaa; background: #fff; padding: 2px 4px; font: 12.500px "Open Sans", sans-serif; color: #333; }

.group { margin-top: 2px; background: #eff4f6; border: 1px solid #e2e6e8; padding: 0 8px; height: 640px; }
.grp-h { height: 24px; display: flex; justify-content: space-between; align-items: center; color: #4a8aab; padding: 0 7px 3px 8px; flex: none; }
.group > .grp-h { margin: 0 -8px; padding-right: 7px; }
.kind-row { display: flex; justify-content: space-between; margin-top: 5px; height: 26px; align-items: center; }
.combo { width: 141px; height: 26px; background: #fff; border: 1px solid #aaa; display: flex; align-items: center; padding: 0 5px; gap: 4px; }
.combo-t { flex: 1; }
.caret { width: 8px; height: 5px; }
.caret-u { width: 8px; height: 5px; transform: rotate(180deg); }

.grp2 { margin-top: 2px; background: #e4e4e4; border: 1px solid #dadada; }
.grp2.collapsed { height: 23px; }
.h139 { height: 139px; }
.h175 { height: 175px; margin-top: 3px; }
.mt4 { margin-top: 4px; }
.mini-tree { margin: 6px 9px 0; height: 98px; background: #fff; border: 1px solid #efefef; display: flex; flex-direction: column; font-family: "Open Sans", "Noto Sans CJK SC", sans-serif; }
.tbl-head { height: 21px; background: #f2f2f2; border-bottom: 1px solid #dcdcdc; padding: 3px 6px 0; font-family: "Noto Sans CJK SC", sans-serif; flex: none; color: #333; }
.mt-mid { flex: 1; display: flex; min-height: 0; }
.mt-rows { flex: 1; position: relative; }
.row { height: 20px; display: flex; align-items: center; padding-left: 6px; color: #333; }
.row.alt { background: #f8f8f8; }
.tw { width: 9px; height: 9px; border: 1px solid #bbb; background: #fff; position: relative; flex: none; }
.tw::before { content: ""; position: absolute; left: 1px; right: 1px; top: 3px; height: 1px; background: #222; }
.plus::after { content: ""; position: absolute; top: 1px; bottom: 1px; left: 3px; width: 1px; background: #222; }
.tw-b { margin-left: 18px; }
.sp-b { width: 27px; flex: none; }
.dh { border-top: 1px dotted #999; height: 0; flex: none; }
.dh-s { width: 5px; margin-right: 1px; }
.dh-xs { width: 5px; }
.ic15 { width: 15px; height: 14px; }
.ic16 { width: 16px; height: 16px; }
.lbl-cn { margin-left: 3px; font-family: "Open Sans", "Noto Sans CJK SC", sans-serif; }
.lbl-l { margin-left: 5px; font-size: 12.500px; white-space: nowrap; }
.sel { background: #3394f0; color: #fff; height: 20px; line-height: 19px; font-size: 12.500px; flex: 1; padding-left: 2px; margin-left: 1px; }
.sel-a { margin-right: 1px; }
.dots-v { position: absolute; width: 0; border-left: 1px dotted #999; }
.dv-a { left: 10px; top: 14px; height: 6px; }
.vsb { width: 17px; background: #fff; display: flex; flex-direction: column; align-items: center; }
.sa { width: 10px; height: 8px; margin: 6px 0; }
.vsb-t { width: 14px; height: 17px; background: #cfcfcf; }
.vsb .sa:first-child { margin: 6px 0 3px; }
.vsb .sa:last-child { margin: 12px 0 0; }
.hsb { height: 17px; background: #f2f2f2; display: flex; align-items: center; flex: none; }
.sh { width: 8px; height: 10px; margin: 0 5px; }
.hsb-a { justify-content: space-between; padding-right: 18px; }
.hsb-t { width: 177px; height: 15px; background: #cacaca; margin-right: 30px; }

.pager { display: flex; margin: 5px 0 0 8px; height: 34px; }
.viewbtn { width: 53px; height: 33px; background: #fff; border: 1px solid #aaa; display: flex; align-items: center; justify-content: space-between; padding: 0 9px 0 11px; }
.pgbtn { width: 32px; height: 32px; border: 1px solid #d0d0d0; display: flex; align-items: center; justify-content: center; }
.ml57 { margin-left: 57px; }
.pg-t { width: 74px; margin-top: 12px; padding-left: 2px; font-size: 13px; color: #333; font-family: "Open Sans", "Noto Sans CJK SC", sans-serif; white-space: nowrap; }
.symlist { margin: 2px 9px 0; height: 99px; background: #fff; display: flex; padding-left: 6px; position: relative; }
.card { width: 72px; height: 95px; margin-top: 4px; background: #c5d5d3; padding-top: 16px; flex: none; font: 12.500px "Open Sans", sans-serif; color: #333; text-align: center; }
.thumb { height: 36px; background: #c8c8c8; position: relative; margin-bottom: 23px; }
.th-line { position: absolute; left: 10px; right: 10px; top: 19px; height: 1.500px; background: #1a1ab0; }
.th-line::before, .th-line::after { content: ""; position: absolute; top: -1px; width: 4px; height: 4px; background: #1a1ab0; }
.th-line::before { left: 0; }
.th-line::after { right: 0; }
.th-n { position: absolute; left: 0; right: 0; top: 1px; font: 28px/36px "Liberation Serif", serif; color: #222; transform: scaleX(.62); }
.symsb { position: absolute; right: 2px; top: 8px; bottom: 6px; width: 11px; display: flex; flex-direction: column; align-items: center; justify-content: space-between; }
.symsb i { width: 11px; height: 54px; background: #dcdcdc; }

.ins-row { display: flex; justify-content: space-between; align-items: center; height: 32px; margin-top: 2px; }
.insbtn { width: 32px; height: 32px; border: 1px solid #aaa; display: flex; align-items: center; justify-content: center; }

.list-wrap { display: flex; margin: 6px 0 0 9px; height: 98px; }
.ltable { width: 233px; height: 98px; background: #fff; border: 1px solid #f0f0f0; font: 12.500px "Open Sans", sans-serif; color: #333; }
.lt-head { height: 21px; background: #f2f2f2; display: flex; border-bottom: 1px solid #ccc; }
.lt-c1 { width: 100px; padding: 2px 6px 0; border-right: 1px solid #ccc; white-space: nowrap; overflow: hidden; }
.lt-sel { height: 20px; background: #3394f0; color: #fff; display: flex; }
.lt-sel .lt-c1 { padding: 1px 3px 0; border-right-color: #7fbdf5; }
.lt-row { height: 20px; border-bottom: 1px solid #e6e6e6; }
.delbtn { width: 24px; height: 24px; margin: -1px 0 0 4px; border: 1px solid #aaa; display: flex; align-items: center; justify-content: center; }

.ctx { position: absolute; left: 109px; top: 855px; width: 99px; height: 71px; background: #fff; border: 1px solid #ddd; box-shadow: 2px 2px 3px #777; padding: 2px; }
.ctx-i { height: 22px; line-height: 21px; padding-left: 26px; color: #222; }
.ctx-i.hl { height: 21px; background: #fdf0cd; border: 1px solid #e3cf85; padding-left: 25px; line-height: 20px; margin-bottom: 1px; }
.cursor { position: absolute; left: 151px; top: 871px; }

/* right panel */
.rpanel { width: 245px; background: #fff; display: flex; flex-direction: column; position: relative; }
.r-title { height: 28px; display: flex; align-items: center; padding-left: 12px; gap: 11px; flex: none; }
.r-box { width: 12px; height: 10px; border: 1px solid #111; border-top-width: 2px; }
.rtree { margin: 0 6px 0 10px; height: 420px; border: 1px solid #d8d8d8; display: flex; flex-direction: column; font-family: "Open Sans", "Noto Sans CJK SC", sans-serif; flex: none; }
.rt-rows { flex: 1; position: relative; background: repeating-linear-gradient(#fff 0 19px, #eeeeee 19px 20px, #fafafa 20px 39px, #eeeeee 39px 40px); overflow: hidden; }
.row2 { height: 20px; display: flex; align-items: center; padding-left: 6px; color: #333; white-space: nowrap; position: relative; }
.row2 .lbl-cn { font-size: 12.500px; margin-left: 2px; }
.row2 .dh-r { width: 5px; }
.row2.lv2 { padding-left: 38px; }
.row2.lv2p { padding-left: 23px; }
.row2 .sel-r { margin-left: 1px; padding-left: 4px; }
.row2 .lbl-l { margin-left: 5px; }
.dv-r1 { left: 10px; top: 10px; height: 160px; }
.dv-r2 { left: 29px; top: 10px; height: 40px; }
.dv-r3 { left: 29px; top: 70px; height: 40px; }
.dv-r4 { left: 29px; top: 130px; height: 20px; }
.dv-r5 { left: 29px; top: 170px; height: 20px; }
.hsb-r { height: 17px; justify-content: space-between; }
.hsb-t2 { width: 144px; height: 15px; background: #cacaca; margin-right: 65px; }
.sash { margin: 1px 6px 0 10px; height: 5px; background: #c8c8c8; flex: none; }
.rlower { margin-left: 10px; height: 494px; flex: none; border-left: 1px solid #e2e2e2; border-bottom: 1px solid #e2e2e2; padding-left: 5px; margin-right: 6px; }
.r-h { height: 26px; line-height: 24px; font-size: 14px; color: #4a8aab; }
.r-h.h22 { height: 22px; line-height: 20px; }
.r-h.h-prev { height: 23px; line-height: 26px; padding-left: 16px; flex: none; }
.r-search { display: flex; align-items: center; gap: 4px; margin-top: 2px; }
.r-input { width: 151px; height: 23px; border: 1px solid #aaa; margin-top: 6px; }
.r-sq { width: 32px; height: 32px; border: 1px solid #bbb; display: flex; align-items: center; justify-content: center; }
.r-sep { height: 2px; background: #e2e2e2; margin: 19px 0 0 -5px; }
.r-pager { display: flex; gap: 2px; margin-top: 4px; height: 33px; overflow: hidden; }
.viewbtn.r { border-color: #999; }
.pg-r { width: 72px; margin-top: 11px; flex: none; }
.peek { width: 10px; border-right: 0; }
.r-list { margin-top: 3px; height: 344px; border-top: 1px solid #e2e2e2; border-left: 1px solid #e2e2e2; border-bottom: 1px solid #e2e2e2; padding: 3px 0 0 9px; }
.card-r { width: 72px; height: 111px; border: 1px solid #ddd; padding: 18px 1px 0; text-align: center; font: 12.500px "Open Sans", sans-serif; color: #333; }
.thumb-r { height: 33px; background: #c8c8c8; position: relative; margin-bottom: 23px; }
.thumb-r .th-line { top: 17px; }
.thumb-r .th-n { top: 0; }
.sash2 { height: 3px; background: #cfcfcf; margin-left: 10px; margin-right: 6px; flex: none; }
.hsb-p { height: 14px; background: #fff; margin-left: 10px; margin-right: 6px; justify-content: space-between; }
.hsb-t3 { width: 202px; height: 14px; background: #d0d0d0; }
.hsb-p .sh { margin: 0 2px; }

.tabs { width: 32px; background: #dcdcdc; border-left: 1px solid #c6c6c6; display: flex; flex-direction: column; }
.tab { width: 28px; display: flex; justify-content: center; align-items: center; flex: none; }
.t1 { height: 28px; }
.t2 { margin-top: 22px; }
.t3 { margin-top: 17px; }
.active { height: 45px; background: #fff; border: 1px solid #c9c9c9; border-left: 0; width: 29px; margin-top: 5px; }
.t5 { margin-top: 19px; }
.t6 { margin-top: 29px; }
.t7 { margin-top: 30px; }
.t8 { margin-top: 19px; }

/* toolbar */
.toolbar { height: 32px; background: #fff; display: flex; align-items: center; padding-left: 203px; }
.cell { width: 25px; height: 28px; flex: none; display: flex; align-items: center; justify-content: center; }
.cell.w24 { width: 24px; }
.cell.w22 { width: 22px; }
.cell.on { background: #c5d6d3; border: 1px solid #c5d6d3; }
.dim { font: 7px/6.500px "Liberation Sans", sans-serif; color: #333; text-align: center; white-space: nowrap; }
.dim b { display: block; font-weight: 400; color: #6f8064; }
.dim.boxed { border: 1px solid #8a2b3c; padding: 2px 1px; color: #444; }
.dim.blue { color: #28347c; }
.tb-input { width: 125px; height: 19px; margin-left: 4px; border: 1px solid #aaa; display: flex; align-items: center; justify-content: space-between; padding: 0 2px; line-height: 15px; flex: none; }
.tb-sep { width: 1px; height: 28px; background: #e4e4e4; flex: none; }
.ml9 { margin-left: 9px; }
.ml8 { margin-left: 8px; }
.ml5 { margin-left: 5px; }
.ml3 { margin-left: 3px; }
.ml1 { margin-left: 1px; }
.tb-menu { width: 90px; display: flex; align-items: center; padding-left: 10px; gap: 4px; flex: none; font-size: 12px; }
.tb-menu .caret { width: 7px; margin-left: 2px; }
.tb-sel { height: 19px; border: 1px solid #aaa; display: flex; align-items: center; justify-content: space-between; padding: 0 5px 0 2px; flex: none; line-height: 15px; }
.w133 { width: 133px; margin-right: 8px; }
.w140 { width: 140px; }
.arrow { width: 12px; display: flex; justify-content: center; flex: none; }
.arrow .caret { width: 7px; height: 4px; }

/* taskbar */
.taskbar { height: 40px; background: #000; display: flex; align-items: stretch; color: #fff; }
.tk-start { width: 48px; display: flex; align-items: center; justify-content: center; flex: none; }
.tk-search { width: 344px; background: #333; display: flex; align-items: center; padding: 0 15px 0 10px; flex: none; color: #aaa; font-size: 14px; }
.tk-search span { flex: 1; margin-left: 6px; }
.cortana { width: 20px; height: 20px; border: 3px solid #e6e6e6; border-radius: 50%; }
.tk-view { width: 46px; display: flex; align-items: center; justify-content: center; flex: none; margin-right: 1px; }
.app { width: 40px; margin: 0 4.500px; display: flex; align-items: center; justify-content: center; flex: none; }
.tk-view + .app { margin-left: 9px; }
.app.on { box-shadow: inset 0 -2px 0 #a8a8a8; }
.app.hi { background: #3a3a3a; box-shadow: inset 0 -2px 0 #a8a8a8; }
.app.vs { background: #5c5a2c; box-shadow: inset 0 -2px 0 #ffe600; }
.pdf { width: 24px; height: 30px; background: #f08a1e; font: 8px/10px "Liberation Sans", sans-serif; color: #fff; padding: 18px 0 0 2px; }
.tray { flex: 1; display: flex; align-items: center; padding-left: 488px; position: relative; z-index: 2; }
.tr-chev { margin-left: 2px; }
.tr-bat { margin-left: 10px; }
.tr-vol { margin-left: 6px; }
.tr-net { margin-left: 9px; }
.tr-ime { margin-left: 16px; }
.clock { width: 84px; margin-left: 5px; display: flex; flex-direction: column; align-items: center; font-size: 12px; line-height: 18px; color: #eee; font-family: "Open Sans", sans-serif; }
.tr-notif { margin-left: 5px; }

.ime { position: absolute; left: 1749px; top: 1010px; width: 167px; height: 25px; background: linear-gradient(#f6f6f6, #dedede); border: 1px solid #c8c8c8; border-radius: 2px; box-shadow: 1px 1px 2px #888; display: flex; align-items: center; justify-content: space-between; padding: 0 8px 0 6px; z-index: 3; }
.ime-zh { font-size: 15px; font-weight: 700; color: #2e6fc0; }
.wm-hex { position: absolute; left: 1638px; top: 985px; }
.wm-text { position: absolute; left: 1719px; top: 1039px; font: 16.500px/22px "Liberation Sans", sans-serif; letter-spacing: 1.500px; color: #8a8a8a; }
```
